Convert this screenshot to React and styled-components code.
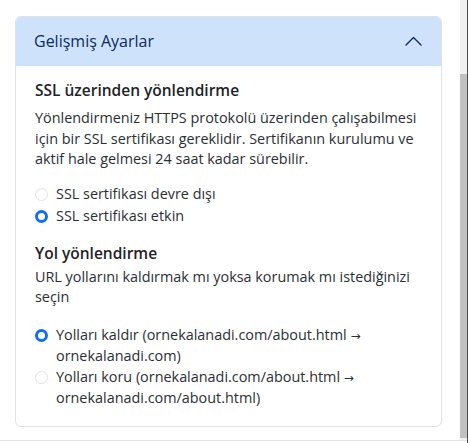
import styled, { createGlobalStyle } from "styled-components";

const GlobalStyle = createGlobalStyle`
  html, body {
    margin: 0;
    padding: 0;
    background: #fff;
    font-family: "Open Sans", "Noto Sans", sans-serif;
    color: #212529;
  }
`;

const Frame = styled.div`
  width: 468px;
  height: 443px;
  box-sizing: border-box;
  border-right: 1px solid #4a4a4a;
  background: #fff;
  display: flex;
  flex-direction: column;
`;

const Viewport = styled.div`
  height: 440px;
  display: flex;
  border-bottom: 1px solid #e3e3e3;
`;

const Content = styled.div`
  flex: 1;
  overflow: hidden;
  padding: 16px 18px 0 15px;
`;

const ScrollTrack = styled.div`
  width: 7px;
  background: #f1f1f1;
  display: flex;
  flex-direction: column;
`;

const ScrollThumb = styled.div`
  margin-top: 74px;
  height: 364px;
  background: #c1c1c1;
`;

const Card = styled.div`
  border: 1px solid #dee2e6;
  border-radius: 6px;
  overflow: hidden;
`;

const Header = styled.div`
  height: 50px;
  background: #cfe2fc;
  display: flex;
  align-items: center;
  justify-content: space-between;
  padding: 0 20px 0 19px;
  color: #0a2c5e;
  font-size: 16px;
  margin: -1px -1px 0;
`;

const Body = styled.div`
  padding: 12px 20px 17px 19px;
`;

const Title = styled.h3`
  margin: 0 0 ${(p) => p.mb ?? 6}px;
  font-size: 15.5px;
  font-weight: 600;
  line-height: 24px;
  color: #1f2326;
`;

const Text = styled.p`
  margin: 0 0 ${(p) => p.mb ?? 14}px;
  font-size: 14.4px;
  line-height: 20.5px;
  color: #2b2f33;
`;

const Options = styled.div`
  display: flex;
  flex-direction: column;
  gap: ${(p) => p.gap || 0}px;
  margin-bottom: ${(p) => p.mb || 0}px;
`;

const Option = styled.label`
  display: flex;
  align-items: flex-start;
  gap: 8px;
  font-size: 14.4px;
  line-height: 20.5px;
  color: #2b2f33;
`;

const Dot = styled.span`
  flex: none;
  width: 13px;
  height: 13px;
  margin-top: 4px;
  border-radius: 50%;
  box-sizing: border-box;
  border: ${(p) => (p.checked ? "3.5px solid #0d6efd" : "1px solid #dfe2e6")};
  background: #fff;
`;

const Arrow = styled.span`
  font-family: "DejaVu Sans", sans-serif;
  font-size: 12px;
`;

const Chevron = () => (
  <svg width="17" height="10" viewBox="0 0 17 10" fill="none">
    <polyline
      points="1,9 8.5,1.5 16,9"
      stroke="#0a2c5e"
      strokeWidth="1.4"
      strokeLinecap="round"
      strokeLinejoin="round"
    />
  </svg>
);

export default function App() {
  return (
    <>
      <GlobalStyle />
      <Frame>
        <Viewport>
          <Content>
            <Card>
              <Header>
                <span>Gelişmiş Ayarlar</span>
                <Chevron />
              </Header>
              <Body>
                <Title>SSL üzerinden yönlendirme</Title>
                <Text>
                  Yönlendirmeniz HTTPS protokolü üzerinden çalışabilmesi
                  <br />
                  için bir SSL sertifikası gereklidir. Sertifikanın kurulumu ve
                  <br />
                  aktif hale gelmesi 24 saat kadar sürebilir.
                </Text>
                <Options gap={2} mb={14}>
                  <Option>
                    <Dot />
                    <span>SSL sertifikası devre dışı</span>
                  </Option>
                  <Option>
                    <Dot checked />
                    <span>SSL sertifikası etkin</span>
                  </Option>
                </Options>
                <Title mb={2}>Yol yönlendirme</Title>
                <Text mb={17}>
                  URL yollarını kaldırmak mı yoksa korumak mı istediğinizi
                  <br />
                  seçin
                </Text>
                <Options>
                  <Option>
                    <Dot checked />
                    <span>
                      Yolları kaldır (ornekalanadi.com/about.html <Arrow>→</Arrow>
                      <br />
                      ornekalanadi.com)
                    </span>
                  </Option>
                  <Option>
                    <Dot />
                    <span>
                      Yolları koru (ornekalanadi.com/about.html <Arrow>→</Arrow>
                      <br />
                      ornekalanadi.com/about.html)
                    </span>
                  </Option>
                </Options>
              </Body>
            </Card>
          </Content>
          <ScrollTrack>
            <ScrollThumb />
          </ScrollTrack>
        </Viewport>
      </Frame>
    </>
  );
}
